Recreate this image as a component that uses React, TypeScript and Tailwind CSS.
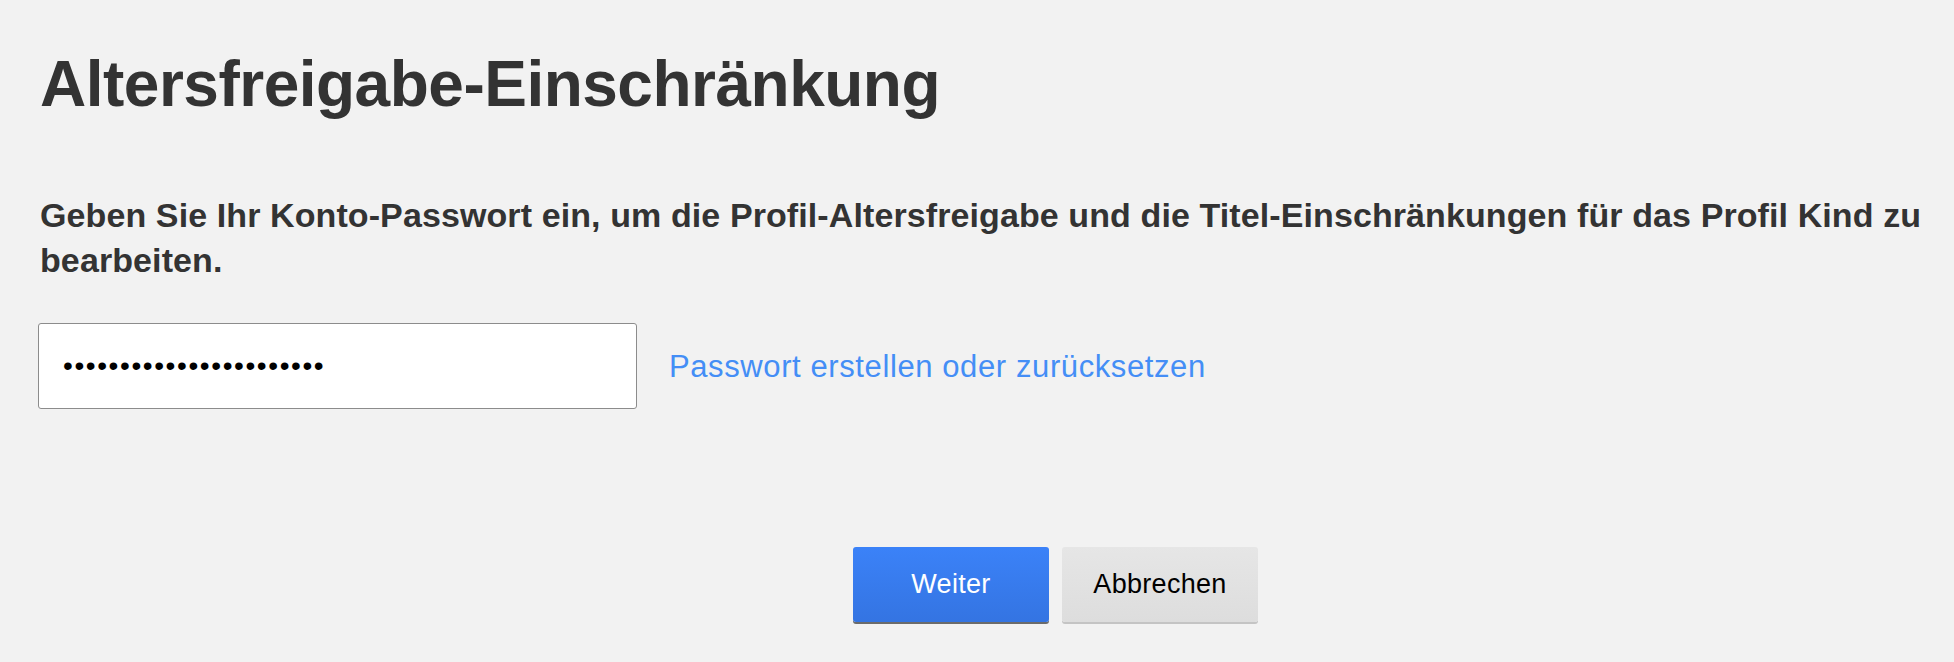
import React from "react";

// Age rating restriction – password confirmation step

export default function App() {
  return (
    <div className="min-h-[662px] w-full bg-[#f2f2f2] font-['Liberation_Sans',Arial,sans-serif] text-[#333]">
      <div className="pl-[40px] pr-[20px] pt-[52px]">
        <h1 className="text-[64px] font-bold leading-[64px] tracking-[-0.5px]">
          Altersfreigabe-Einschränkung
        </h1>

        <p className="mt-[77px] text-[34px] font-bold leading-[45px] tracking-[0.1px]">
          Geben Sie Ihr Konto-Passwort ein, um die Profil-Altersfreigabe und die
          Titel-Einschränkungen für das Profil Kind zu bearbeiten.
        </p>

        {/* ── Password row ─────────────────────────────────────────── */}
        <div className="mt-[40px] flex items-center gap-[32px]">
          <div className="ml-[-2px] flex h-[86px] w-[599px] items-center rounded-[3px] border border-[#8c8c8c] bg-white pl-[24px]">
            <input
              type="password"
              defaultValue="abcdefghijklmnopqrstuvw"
              className="w-full bg-transparent text-[28px] tracking-[1.6px] text-black outline-none"
            />
          </div>
          <a href="#" className="text-[31px] leading-none tracking-[0.6px] text-[#448ef6]">
            Passwort erstellen oder zurücksetzen
          </a>
        </div>

        {/* ── Actions ──────────────────────────────────────────────── */}
        <div className="ml-[813px] mt-[138px] flex gap-[13px]">
          <button className="h-[75px] w-[196px] rounded-[3px] bg-gradient-to-b from-[#3b82f8] to-[#3474e2] text-[27px] tracking-[0.3px] text-white shadow-[0_2px_0_#6b6b6b]">
            Weiter
          </button>
          <button className="h-[75px] w-[196px] rounded-[3px] bg-gradient-to-b from-[#e6e6e6] to-[#dddddd] text-[27px] tracking-[0.3px] text-black shadow-[0_2px_0_#c4c4c4]">
            Abbrechen
          </button>
        </div>
      </div>
    </div>
  );
}
